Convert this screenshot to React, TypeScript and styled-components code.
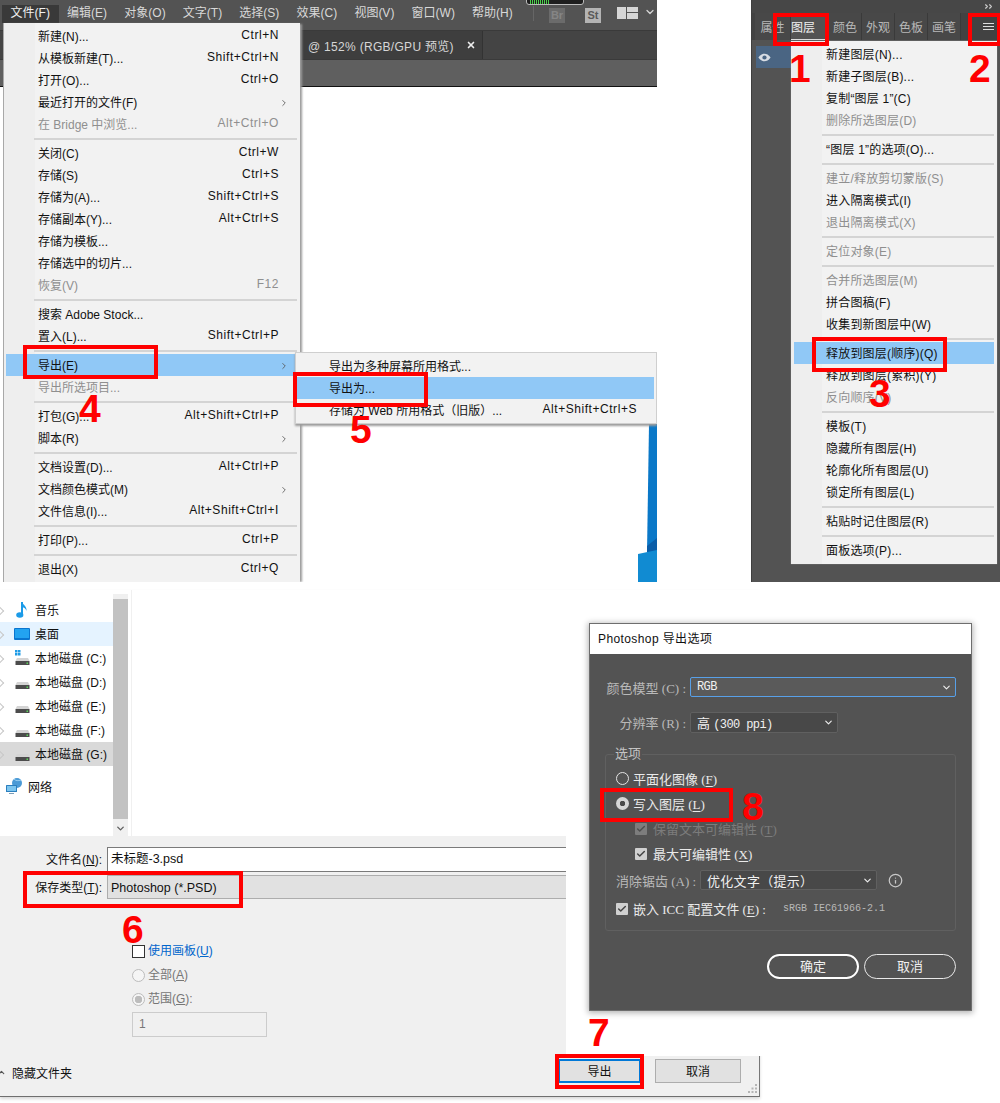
import { ChevronDown, ChevronRight, ChevronUp, Check, Info, X } from "lucide-react";
import styled, { createGlobalStyle } from "styled-components";

const sans = `"Open Sans", "Noto Sans CJK SC", sans-serif`;
const ui = `"Liberation Sans", "Noto Sans CJK SC", sans-serif`;
const serif = `"Liberation Serif", "Noto Sans CJK SC", serif`;

const Global = createGlobalStyle`
  html, body { margin: 0; background: #fff; }
  body { font-family: ${sans}; font-size: 12px; }
  * { box-sizing: border-box; }
`;

type Item = { t?: string; k?: string; off?: boolean; arrow?: boolean; on?: boolean; sep?: boolean };

const fileMenu: Item[] = [
  { t: "新建(N)...", k: "Ctrl+N" },
  { t: "从模板新建(T)...", k: "Shift+Ctrl+N" },
  { t: "打开(O)...", k: "Ctrl+O" },
  { t: "最近打开的文件(F)", arrow: true },
  { t: "在 Bridge 中浏览...", k: "Alt+Ctrl+O", off: true },
  { sep: true },
  { t: "关闭(C)", k: "Ctrl+W" },
  { t: "存储(S)", k: "Ctrl+S" },
  { t: "存储为(A)...", k: "Shift+Ctrl+S" },
  { t: "存储副本(Y)...", k: "Alt+Ctrl+S" },
  { t: "存储为模板..." },
  { t: "存储选中的切片..." },
  { t: "恢复(V)", k: "F12", off: true },
  { sep: true },
  { t: "搜索 Adobe Stock..." },
  { t: "置入(L)...", k: "Shift+Ctrl+P" },
  { sep: true },
  { t: "导出(E)", arrow: true, on: true },
  { t: "导出所选项目...", off: true },
  { sep: true },
  { t: "打包(G)...", k: "Alt+Shift+Ctrl+P" },
  { t: "脚本(R)", arrow: true },
  { sep: true },
  { t: "文档设置(D)...", k: "Alt+Ctrl+P" },
  { t: "文档颜色模式(M)", arrow: true },
  { t: "文件信息(I)...", k: "Alt+Shift+Ctrl+I" },
  { sep: true },
  { t: "打印(P)...", k: "Ctrl+P" },
  { sep: true },
  { t: "退出(X)", k: "Ctrl+Q" },
];

const exportMenu: Item[] = [
  { t: "导出为多种屏幕所用格式..." },
  { t: "导出为...", on: true },
  { t: "存储为 Web 所用格式（旧版）...", k: "Alt+Shift+Ctrl+S" },
];

const layerMenu: Item[] = [
  { t: "新建图层(N)..." },
  { t: "新建子图层(B)..." },
  { t: "复制“图层 1”(C)" },
  { t: "删除所选图层(D)", off: true },
  { sep: true },
  { t: "“图层 1”的选项(O)..." },
  { sep: true },
  { t: "建立/释放剪切蒙版(S)", off: true },
  { t: "进入隔离模式(I)" },
  { t: "退出隔离模式(X)", off: true },
  { sep: true },
  { t: "定位对象(E)", off: true },
  { sep: true },
  { t: "合并所选图层(M)", off: true },
  { t: "拼合图稿(F)" },
  { t: "收集到新图层中(W)" },
  { sep: true },
  { t: "释放到图层(顺序)(Q)", on: true },
  { t: "释放到图层(累积)(Y)" },
  { t: "反向顺序(V)", off: true },
  { sep: true },
  { t: "模板(T)" },
  { t: "隐藏所有图层(H)" },
  { t: "轮廓化所有图层(U)" },
  { t: "锁定所有图层(L)" },
  { sep: true },
  { t: "粘贴时记住图层(R)" },
  { sep: true },
  { t: "面板选项(P)..." },
];

const topMenu = ["文件(F)", "编辑(E)", "对象(O)", "文字(T)", "选择(S)", "效果(C)", "视图(V)", "窗口(W)", "帮助(H)"];
const panelTabs = ["属性", "图层", "颜色", "外观", "色板", "画笔"];
const drives = ["C", "D", "E", "F", "G"];

export default function App() {
  return (
    <Page>
      <Global />
      <AppWindow>
        <TopBar>
          {topMenu.map((m, i) => (
            <TopItem key={m} $active={i === 0}>
              {m}
            </TopItem>
          ))}
          <TopRight>
            <TopDivider />
            <BridgeBadge $kind="br">Br</BridgeBadge>
            <BridgeBadge $kind="st">St</BridgeBadge>
            <WorkspaceIcon width="21" height="12" viewBox="0 0 21 12" fill="#d6d6d6">
              <rect x="0" y="0" width="9" height="12" />
              <rect x="10" y="0" width="11" height="5" />
              <rect x="10" y="6" width="11" height="6" />
            </WorkspaceIcon>
            <WorkspaceArrow>
              <ChevronDown size={12} color="#d6d6d6" strokeWidth={2.5} />
            </WorkspaceArrow>
          </TopRight>
          <PerfPill>
            <PerfBars />
          </PerfPill>
        </TopBar>
        <TabBar>
          <DocTab>
            @ 152% (RGB/GPU 预览)
            <X size={10} color="#eee" strokeWidth={4} />
          </DocTab>
        </TabBar>
        <OptionsBar />
        <Canvas>
          <BlueShape width="24" height="158" viewBox="0 0 24 158">
            <polygon points="16,0 24,0 24,128 14,128" fill="#0a78c8" />
            <polygon points="14,122 24,114 24,130 14,128" fill="#0a5da8" />
            <polygon points="5,130 24,126 24,158 5,158" fill="#118bd2" />
          </BlueShape>
        </Canvas>
        <FileMenu>
          <MenuList items={fileMenu} />
        </FileMenu>
        <SubMenu>
          <MenuList items={exportMenu} />
        </SubMenu>
      </AppWindow>

      <LayersPanel>
        <PanelStrip>
          <ChevronRight size={7} color="#ccc" strokeWidth={4} />
          <ChevronRight size={7} color="#ccc" strokeWidth={4} />
        </PanelStrip>
        <PanelTabs>
          {panelTabs.map((t, i) => (
            <PanelTab key={t} $active={i === 1} $first={i === 0}>
              {t}
            </PanelTab>
          ))}
          <Hamburger>
            <span />
            <span />
            <span />
          </Hamburger>
        </PanelTabs>
        <LayerRow>
          <svg width="13" height="9" viewBox="0 0 16 10">
            <path d="M0.5 5C3 1.5 5.5 0.5 8 0.5S13 1.5 15.5 5C13 8.5 10.5 9.5 8 9.5S3 8.5 0.5 5Z" fill="#d8dde4" />
            <circle cx="8" cy="5" r="2.6" fill="#4a6583" />
          </svg>
        </LayerRow>
        <LayerMenu>
          <MenuList items={layerMenu} />
        </LayerMenu>
      </LayersPanel>

      <SaveDialog>
        <NavArea>
          <Tree>
            <TreeRow>
              <TreeIcon>
                <svg width="15" height="18" viewBox="0 0 15 18">
                  <path d="M7 1V13.5" stroke="#1b9be8" strokeWidth="2" />
                  <ellipse cx="4.8" cy="14" rx="3.6" ry="2.8" fill="#1b9be8" />
                  <path d="M7 1C8 4 12 5 11.5 10C11 7.5 9 6.5 7 6Z" fill="#1b9be8" />
                </svg>
              </TreeIcon>
              音乐
            </TreeRow>
            <TreeRow $tone="hover">
              <TreeIcon>
                <svg width="16" height="12" viewBox="0 0 16 12">
                  <rect x="0" y="0" width="16" height="12" rx="1" fill="#0a75cf" />
                  <rect x="1" y="1" width="14" height="9" fill="#23a3f0" />
                </svg>
              </TreeIcon>
              桌面
            </TreeRow>
            {drives.map((d) => (
              <TreeRow key={d} $tone={d === "G" ? "selected" : undefined}>
                <TreeIcon>
                  <DriveIcon system={d === "C"} />
                </TreeIcon>
                本地磁盘 ({d}:)
              </TreeRow>
            ))}
            <NetworkRow>
              <svg width="17" height="16" viewBox="0 0 17 16">
                <circle cx="11" cy="5" r="5" fill="#4a9ad6" />
                <path d="M8 1C10 3 12 3 15 2" stroke="#9ad0f2" fill="none" />
                <rect x="0" y="7" width="11" height="7" rx="0.5" fill="#2c7fbe" />
                <rect x="1" y="8" width="9" height="5" fill="#7cc5ef" />
                <rect x="3" y="15" width="5" height="1" fill="#7a9db8" />
              </svg>
              网络
            </NetworkRow>
          </Tree>
          <Scroller>
            <ScrollThumb />
            <ChevronDown size={11} color="#606060" strokeWidth={3} />
          </Scroller>
          <PaneDivider />
        </NavArea>
        <FormArea>
          <FieldRow>
            <FieldLabel>
              文件名(<u>N</u>):
            </FieldLabel>
            <NameInput>未标题-3.psd</NameInput>
          </FieldRow>
          <FieldRow>
            <FieldLabel>
              保存类型(<u>T</u>):
            </FieldLabel>
            <TypeSelect>Photoshop (*.PSD)</TypeSelect>
          </FieldRow>
          <SaveOptions>
            <SaveOption>
              <PlainCheck />
              <BlueText>
                使用画板(<u>U</u>)
              </BlueText>
            </SaveOption>
            <SaveOption $off>
              <PlainRadio />
              <span>
                全部(<u>A</u>)
              </span>
            </SaveOption>
            <SaveOption $off>
              <PlainRadio $on />
              <span>
                范围(<u>G</u>):
              </span>
            </SaveOption>
            <RangeInput>1</RangeInput>
          </SaveOptions>
          <Footer>
            <HideFolders>
              <ChevronUp size={9} color="#555" strokeWidth={3} />
              隐藏文件夹
            </HideFolders>
            <FooterButtons>
              <WinButton $primary>导出</WinButton>
              <WinButton>取消</WinButton>
            </FooterButtons>
            <Grip width="10" height="10" viewBox="0 0 10 10" fill="#b5b5b5">
              <rect x="7" y="0" width="2" height="2" />
              <rect x="3.5" y="3.5" width="2" height="2" />
              <rect x="7" y="3.5" width="2" height="2" />
              <rect x="0" y="7" width="2" height="2" />
              <rect x="3.5" y="7" width="2" height="2" />
              <rect x="7" y="7" width="2" height="2" />
            </Grip>
          </Footer>
        </FormArea>
      </SaveDialog>

      <OptionsBacking>
        <ExportDialog>
          <DialogTitle>Photoshop 导出选项</DialogTitle>
          <DialogBody>
            <LabelRow>
              <DialogLabel>颜色模型 (C) :</DialogLabel>
              <DarkSelect $w={266} $h={20} $focus>
                <Mono>RGB</Mono>
                <ChevronDown size={11} strokeWidth={2.5} />
              </DarkSelect>
            </LabelRow>
            <LabelRow $mt={15}>
              <DialogLabel>分辨率 (R) :</DialogLabel>
              <DarkSelect $w={148} $h={21}>
                <span>
                  高 <Mono>(300 ppi)</Mono>
                </span>
                <ChevronDown size={11} strokeWidth={2.5} />
              </DarkSelect>
            </LabelRow>
            <Group>
              <GroupLegend>选项</GroupLegend>
              <GroupRow>
                <DarkRadio />
                <span>
                  平面化图像 (<u>F</u>)
                </span>
              </GroupRow>
              <GroupRow>
                <DarkRadio $on />
                <span>
                  写入图层 (<u>L</u>)
                </span>
              </GroupRow>
              <GroupRow $indent $off>
                <DarkCheck $off>
                  <Check size={10} strokeWidth={3.5} />
                </DarkCheck>
                <span>
                  保留文本可编辑性 (<u>T</u>)
                </span>
              </GroupRow>
              <GroupRow $indent>
                <DarkCheck>
                  <Check size={10} strokeWidth={3.5} />
                </DarkCheck>
                <span>
                  最大可编辑性 (<u>X</u>)
                </span>
              </GroupRow>
              <AliasRow>
                <AliasLabel>消除锯齿 (A) :</AliasLabel>
                <DarkSelect $w={177} $h={20}>
                  <AliasValue>优化文字（提示）</AliasValue>
                  <ChevronDown size={11} strokeWidth={2.5} />
                </DarkSelect>
                <InfoIcon>
                  <Info size={15} strokeWidth={2} />
                </InfoIcon>
              </AliasRow>
              <EmbedRow>
                <DarkCheck>
                  <Check size={10} strokeWidth={3.5} />
                </DarkCheck>
                <span>
                  嵌入 ICC 配置文件 (<u>E</u>) :
                </span>
                <ProfileName>sRGB IEC61966-2.1</ProfileName>
              </EmbedRow>
            </Group>
            <DialogButtons>
              <PillButton $main>确定</PillButton>
              <PillButton>取消</PillButton>
            </DialogButtons>
          </DialogBody>
        </ExportDialog>
      </OptionsBacking>

      <RedBox $x={23} $y={345} $w={135} $h={34} />
      <RedBox $x={293} $y={372} $w={135} $h={35} />
      <RedBox $x={773} $y={13} $w={56} $h={33} />
      <RedBox $x={968} $y={13} $w={33} $h={33} />
      <RedBox $x={812} $y={337} $w={135} $h={35} />
      <RedBox $x={23} $y={871} $w={220} $h={37} />
      <RedBox $x={555} $y={1054} $w={89} $h={35} />
      <RedBox $x={600} $y={788} $w={133} $h={34} />
      <StepNumber $x={79} $y={385}>4</StepNumber>
      <StepNumber $x={350} $y={406}>5</StepNumber>
      <StepNumber $x={789} $y={45}>1</StepNumber>
      <StepNumber $x={969} $y={45}>2</StepNumber>
      <StepNumber $x={869} $y={370}>3</StepNumber>
      <StepNumber $x={122} $y={906}>6</StepNumber>
      <StepNumber $x={588} $y={1009}>7</StepNumber>
      <StepNumber $x={742} $y={783}>8</StepNumber>
    </Page>
  );
}

function MenuList({ items }: { items: Item[] }) {
  return (
    <>
      {items.map((item, i) =>
        item.sep ? (
          <MenuSep key={i} />
        ) : (
          <MenuRow key={i} $off={item.off} $on={item.on}>
            <MenuText>{item.t}</MenuText>
            {item.k && <MenuKey>{item.k}</MenuKey>}
            {item.arrow && (
              <MenuArrow>
                <ChevronRight size={10} strokeWidth={2} />
              </MenuArrow>
            )}
          </MenuRow>
        )
      )}
    </>
  );
}

function DriveIcon({ system }: { system: boolean }) {
  return (
    <svg width="15" height="16" viewBox="0 0 15 16">
      {system && (
        <g fill="#1e9be6">
          <rect x="0" y="0" width="2.5" height="2.5" />
          <rect x="3" y="0" width="2.5" height="2.5" />
          <rect x="0" y="3" width="2.5" height="2.5" />
          <rect x="3" y="3" width="2.5" height="2.5" />
        </g>
      )}
      <path d="M2 8H13L14.5 11H0.5Z" fill="#d4d4d4" />
      <rect x="0.5" y="11" width="14" height="4" fill="#4c4c4c" />
      <rect x="11.5" y="12.5" width="1.5" height="1.5" fill="#5ad65a" />
    </svg>
  );
}

const Page = styled.div`
  position: relative;
  width: 1000px;
  height: 1103px;
  overflow: hidden;
  background: #fff;
`;

/* ---------- top left: the application window ---------- */

const AppWindow = styled.section`
  position: absolute;
  left: 0;
  top: 0;
  width: 657px;
  height: 582px;
  display: flex;
  flex-direction: column;
  overflow: hidden;
`;

const TopBar = styled.div`
  position: relative;
  height: 30px;
  flex: none;
  display: flex;
  align-items: flex-start;
  padding: 5px 0 0 2px;
  background: #535353;
`;

const TopItem = styled.div<{ $active?: boolean }>`
  height: 18px;
  padding: 0 8.6px;
  line-height: 16px;
  font-family: ${ui};
  font-size: 12px;
  color: ${(p) => (p.$active ? "#f0f0f0" : "#d8d8d8")};
  background: ${(p) => (p.$active ? "#393939" : "transparent")};
`;

const TopRight = styled.div`
  margin-left: auto;
  display: flex;
  align-items: center;
  padding-right: 1px;
  height: 17px;
`;

const TopDivider = styled.i`
  width: 1px;
  height: 15px;
  background: #666;
`;

const BridgeBadge = styled.span<{ $kind: "br" | "st" }>`
  width: 16px;
  height: 15px;
  margin-left: ${(p) => (p.$kind === "br" ? "15px" : "20px")};
  margin-top: 3px;
  line-height: 15px;
  text-align: center;
  font-family: ${ui};
  font-size: 11px;
  font-weight: 700;
  background: ${(p) => (p.$kind === "br" ? "#6b6b6b" : "#b4b4b4")};
  color: ${(p) => (p.$kind === "br" ? "#858585" : "#5a5a5a")};
`;

const WorkspaceIcon = styled.svg`
  margin-left: 16px;
  margin-top: -2px;
`;

const WorkspaceArrow = styled.span`
  margin-left: 6px;
  margin-top: -4px;
  display: flex;
`;

const PerfPill = styled.div`
  position: absolute;
  left: 526px;
  top: -4px;
  width: 58px;
  height: 9px;
  border-radius: 3px;
  background: #1e1e1e;
  border: 1px solid #bbb;
  padding: 3px 0 0 3px;
`;

const PerfBars = styled.div`
  width: 20px;
  height: 4px;
  background: repeating-linear-gradient(90deg, #4ad04a 0 1px, #1e1e1e 1px 2px);
`;

const TabBar = styled.div`
  height: 30px;
  flex: none;
  display: flex;
  padding-left: 300px;
  background: #444;
  border-top: 1px solid #3a3a3a;
  border-bottom: 1px solid #3a3a3a;
`;

const DocTab = styled.div`
  width: 183px;
  display: flex;
  align-items: center;
  justify-content: space-between;
  padding: 0 6px 0 8px;
  background: #3e3e3e;
  border-right: 1px solid #333;
  font-family: ${ui};
  font-size: 12px;
  letter-spacing: 0.3px;
  color: #d6d6d6;
`;

const OptionsBar = styled.div`
  height: 27px;
  flex: none;
  background: #5f5f5f;
  border-bottom: 1px solid #111;
`;

const Canvas = styled.div`
  flex: 1;
  position: relative;
  background: #fff;
`;

const BlueShape = styled.svg`
  position: absolute;
  right: 0;
  bottom: 0;
`;

const FileMenu = styled.div`
  position: absolute;
  left: 3px;
  top: 23px;
  width: 297px;
  height: 560px;
  padding: 2px 5px 0 2px;
  background: linear-gradient(90deg, #eeeeee 0 31px, #f2f2f2 31px);
  border-left: 1px solid #a8a8a8;
  box-shadow: 3px 0 2px -1px #9c9c9c;
  --menu-pad: 32px;
  --key-right: 16px;
  --arrow-right: 6px;
  --sep-left: 28px;
  --sep-right: -2px;
`;

const SubMenu = styled.div`
  position: absolute;
  left: 295px;
  top: 352px;
  width: 362px;
  height: 72px;
  padding: 2px 2px 0 1px;
  background: #f2f2f2;
  border: 1px solid #cfcfcf;
  box-shadow: 0 2px 2px #9c9c9c;
  --menu-pad: 32px;
  --key-right: 17px;
  --arrow-right: 7px;
  --sep-left: 28px;
  --sep-right: 0;
`;

const MenuRow = styled.div<{ $off?: boolean; $on?: boolean }>`
  position: relative;
  height: 22px;
  display: flex;
  align-items: center;
  justify-content: space-between;
  padding: 0 var(--key-right) 2px var(--menu-pad);
  font-family: ${ui};
  font-size: 12px;
  white-space: nowrap;
  color: ${(p) => (p.$off ? "#8f8f8f" : "#111")};
  background: ${(p) => (p.$on ? "#90c8f6" : "transparent")};
`;

const MenuText = styled.span``;

const MenuKey = styled.span`
  letter-spacing: 0.55px;
`;

const MenuArrow = styled.span`
  position: absolute;
  right: var(--arrow-right);
  top: 6px;
  color: #555;
`;

const MenuSep = styled.div`
  height: 7px;
  margin: 0 var(--sep-right) 0 var(--sep-left);
  background: linear-gradient(#0000 0 3px, #d4d4d4 3px 5px, #0000 5px);
`;

/* ---------- top right: the layers panel ---------- */

const LayersPanel = styled.section`
  position: absolute;
  left: 751px;
  top: 0;
  width: 249px;
  height: 582px;
  background: #535353;
  border-left: 1px solid #3f3f3f;
  padding-left: 3px;
`;

const PanelStrip = styled.div`
  height: 13px;
  margin-left: -3px;
  display: flex;
  align-items: center;
  justify-content: flex-end;
  padding-right: 6px;
  background: #474747;
  svg + svg {
    margin-left: -3px;
  }
`;

const PanelTabs = styled.div`
  height: 27px;
  margin-left: -3px;
  padding-left: 3px;
  display: flex;
  align-items: stretch;
  background: #424242;
`;

const PanelTab = styled.div<{ $active?: boolean; $first?: boolean }>`
  width: ${(p) => (p.$first ? "36px" : p.$active ? "38px" : "33px")};
  display: flex;
  align-items: center;
  justify-content: ${(p) => (p.$active ? "flex-start" : "center")};
  font-family: ${ui};
  font-size: 12px;
  color: ${(p) => (p.$active ? "#f0f0f0" : "#b8b8b8")};
  background: ${(p) => (p.$active ? "#535353" : "#484848")};
  border-right: 1px solid #3a3a3a;
  ${(p) => (p.$active ? "border-bottom: 1px solid #ddd;" : "")}
`;

const Hamburger = styled.div`
  margin-left: auto;
  margin-right: 6px;
  width: 11px;
  display: flex;
  flex-direction: column;
  justify-content: center;
  gap: 2px;
  span {
    height: 1px;
    background: #ddd;
  }
`;

const LayerRow = styled.div`
  width: 37px;
  height: 22px;
  margin-top: 6px;
  margin-left: 1px;
  display: flex;
  align-items: center;
  padding-left: 2px;
  background: #4a6583;
`;

const LayerMenu = styled.div`
  position: absolute;
  left: 39px;
  top: 41px;
  width: 206px;
  height: 523px;
  padding: 2px 3px 0 3px;
  background: linear-gradient(90deg, #eeeeee 0 31px, #f2f2f2 31px);
  box-shadow: 0 0 1px #999;
  --menu-pad: 32px;
  --key-right: 4px;
  --arrow-right: 4px;
  --sep-left: 28px;
  --sep-right: 0;
  ${MenuText} {
    letter-spacing: 0.2px;
  }
`;

/* ---------- bottom left: the save dialog ---------- */

const SaveDialog = styled.section`
  position: absolute;
  left: 0;
  top: 590px;
  width: 760px;
  height: 507px;
  display: flex;
  flex-direction: column;
  background: #f0f0f0;
  border-right: 1px solid #777;
  border-bottom: 1px solid #6f6f6f;
  box-shadow: 0 2px 3px #d8d8d8;
  font-family: ${ui};
  font-size: 12px;
  color: #111;
`;

const NavArea = styled.div`
  height: 246px;
  flex: none;
  display: flex;
  background: #fff;
`;

const Tree = styled.div`
  width: 113px;
  padding-top: 8px;
`;

const TreeRow = styled.div<{ $tone?: "hover" | "selected" }>`
  position: relative;
  height: 24px;
  display: flex;
  align-items: center;
  padding-bottom: 1px;
  white-space: nowrap;
  background: ${(p) => (p.$tone === "hover" ? "#e5f3ff" : p.$tone === "selected" ? "#d9d9d9" : "transparent")};
  &::before {
    content: "";
    position: absolute;
    left: -3px;
    top: 10px;
    width: 5px;
    height: 5px;
    border-top: 1px solid #c8c8c8;
    border-right: 1px solid #c8c8c8;
    transform: rotate(45deg);
  }
`;

const TreeIcon = styled.span`
  width: 35px;
  flex: none;
  display: flex;
  justify-content: flex-end;
  padding-right: 5px;
`;

const NetworkRow = styled.div`
  height: 24px;
  margin-top: 9px;
  padding: 0 0 2px 6px;
  display: flex;
  align-items: center;
  gap: 5px;
`;

const Scroller = styled.div`
  width: 15px;
  margin-top: 4px;
  display: flex;
  flex-direction: column;
  align-items: center;
  background: #f0f0f0;
`;

const ScrollThumb = styled.div`
  width: 100%;
  height: 220px;
  margin-top: 5px;
  margin-bottom: 4px;
  background: #c2c2c2;
`;

const PaneDivider = styled.div`
  width: 1px;
  margin-left: 3px;
  background: #f0f0f0;
`;

const FormArea = styled.div`
  flex: 1;
  display: flex;
  flex-direction: column;
  padding-top: 11px;
  min-height: 0;
`;

const FieldRow = styled.div`
  display: flex;
  align-items: center;
  gap: 5px;
  margin-bottom: 3px;
`;

const FieldLabel = styled.label`
  width: 102px;
  padding-bottom: 2px;
  text-align: right;
`;

const NameInput = styled.div`
  flex: 1;
  height: 25px;
  padding-left: 3px;
  line-height: 22px;
  background: #fff;
  border: 1px solid #7a7a7a;
  border-right: 0;
  font-size: 12.5px;
`;

const TypeSelect = styled.div`
  flex: 1;
  height: 24px;
  padding-left: 3px;
  line-height: 24px;
  background: #e1e1e1;
  border: 1px solid #adadad;
  border-right: 0;
  font-size: 12.5px;
`;

const SaveOptions = styled.div`
  margin: 37px 0 0 132px;
  display: flex;
  flex-direction: column;
`;

const SaveOption = styled.div<{ $off?: boolean }>`
  height: 24px;
  display: flex;
  align-items: center;
  gap: 3px;
  color: ${(p) => (p.$off ? "#767676" : "#111")};
  span {
    margin-bottom: 3px;
  }
`;

const PlainCheck = styled.i`
  width: 13px;
  height: 13px;
  background: #fff;
  border: 1px solid #333;
`;

const PlainRadio = styled.i<{ $on?: boolean }>`
  width: 13px;
  height: 13px;
  border-radius: 50%;
  border: 1px solid #bcbcbc;
  background: ${(p) => (p.$on ? "radial-gradient(circle, #bcbcbc 0 3.5px, #f5f5f5 4px)" : "#f5f5f5")};
`;

const BlueText = styled.span`
  color: #0066cc;
`;

const RangeInput = styled.div`
  width: 135px;
  height: 25px;
  margin-top: 1px;
  padding-left: 6px;
  line-height: 23px;
  border: 1px solid #ccc;
  color: #777;
`;

const Footer = styled.div`
  position: relative;
  margin-top: auto;
  display: flex;
  align-items: center;
  justify-content: space-between;
  height: 24px;
  margin-bottom: 13px;
  padding: 0 18px 0 0;
`;

const HideFolders = styled.div`
  display: flex;
  align-items: center;
  gap: 6px;
  margin-left: -3px;
  margin-top: 2px;
`;

const FooterButtons = styled.div`
  display: flex;
  gap: 14px;
`;

const WinButton = styled.div<{ $primary?: boolean }>`
  width: ${(p) => (p.$primary ? "83px" : "86px")};
  height: 24px;
  line-height: ${(p) => (p.$primary ? "22px" : "24px")};
  text-align: center;
  background: #e1e1e1;
  border: ${(p) => (p.$primary ? "2px solid #0078d7" : "1px solid #adadad")};
`;

const Grip = styled.svg`
  position: absolute;
  right: 1px;
  bottom: -11px;
`;

/* ---------- bottom right: the export options ---------- */

const OptionsBacking = styled.section`
  position: absolute;
  left: 566px;
  top: 590px;
  width: 434px;
  height: 466px;
  padding: 33px 0 0 23px;
  background: #fff;
`;

const ExportDialog = styled.div`
  width: 383px;
  height: 388px;
  display: flex;
  flex-direction: column;
  border: 1px solid #6e6e6e;
  box-shadow: 0 1px 6px 1px rgba(0, 0, 0, 0.3);
`;

const DialogTitle = styled.div`
  height: 30px;
  flex: none;
  padding-left: 8px;
  line-height: 30px;
  background: #fff;
  font-family: ${ui};
  font-size: 12px;
  letter-spacing: 0.4px;
  color: #111;
`;

const DialogBody = styled.div`
  flex: 1;
  padding: 23px 15px 0 15px;
  background: #535353;
  font-family: ${serif};
  font-size: 13px;
  color: #e3e3e3;
  u {
    text-underline-offset: 2px;
  }
`;

const Mono = styled.span`
  font-family: "Liberation Mono", monospace;
  font-size: 12px;
  letter-spacing: -0.6px;
`;

const LabelRow = styled.div<{ $mt?: number }>`
  display: flex;
  align-items: center;
  gap: 4px;
  margin-top: ${(p) => p.$mt ?? 0}px;
`;

const DialogLabel = styled.label`
  width: 81px;
  flex: none;
  text-align: right;
  white-space: nowrap;
  color: #b9b9b9;
`;

const DarkSelect = styled.div<{ $w: number; $h: number; $focus?: boolean }>`
  width: ${(p) => p.$w}px;
  height: ${(p) => p.$h}px;
  flex: none;
  display: flex;
  align-items: center;
  justify-content: space-between;
  padding: 0 3px 0 6px;
  border-radius: 2px;
  white-space: pre;
  color: #f0f0f0;
  background: ${(p) => (p.$focus ? "#5a5a5a" : "#484848")};
  border: 1px solid ${(p) => (p.$focus ? "#58a0e8" : "#606060")};
  svg {
    color: #eee;
  }
`;

const Group = styled.fieldset`
  margin: 13px 0 0;
  padding: 4px 0 9px 10px;
  width: 351px;
  min-width: 0;
  border: 1px solid #606060;
  border-radius: 3px;
`;

const GroupLegend = styled.legend`
  margin-left: -2px;
  padding: 0 1px;
  line-height: 16px;
  color: #c4c4c4;
`;

const GroupRow = styled.div<{ $indent?: boolean; $off?: boolean }>`
  height: 25px;
  display: flex;
  align-items: center;
  gap: ${(p) => (p.$indent ? "6px" : "4px")};
  padding-left: ${(p) => (p.$indent ? "19px" : "0")};
  color: ${(p) => (p.$off ? "#7c7c7c" : "#eaeaea")};
  white-space: pre;
`;

const DarkRadio = styled.i<{ $on?: boolean }>`
  width: 13px;
  height: 13px;
  flex: none;
  border-radius: 50%;
  border: ${(p) => (p.$on ? "none" : "1px solid #e4e4e4")};
  background: ${(p) => (p.$on ? "radial-gradient(circle, #4a4a4a 0 2.5px, #d6d6d6 3px)" : "transparent")};
`;

const DarkCheck = styled.i<{ $off?: boolean }>`
  width: 12px;
  height: 12px;
  flex: none;
  display: flex;
  align-items: center;
  justify-content: center;
  border-radius: 1px;
  background: ${(p) => (p.$off ? "#7d7d7d" : "#d0d0d0")};
  color: ${(p) => (p.$off ? "#4f4f4f" : "#444")};
`;

const AliasRow = styled.div`
  display: flex;
  align-items: center;
  gap: 4px;
  margin-top: 4px;
  height: 20px;
`;

const AliasLabel = styled.label`
  width: 80px;
  flex: none;
  white-space: nowrap;
  color: #b9b9b9;
`;

const AliasValue = styled.span`
  letter-spacing: 0.3px;
`;

const InfoIcon = styled.span`
  margin-left: 7px;
  display: flex;
  color: #c8c8c8;
`;

const EmbedRow = styled.div`
  height: 25px;
  margin-top: 6px;
  display: flex;
  align-items: center;
  gap: 5px;
  white-space: pre;
  color: #eaeaea;
`;

const ProfileName = styled.span`
  margin-left: 12px;
  font-family: "Liberation Mono", monospace;
  font-size: 10px;
  color: #b8b8b8;
`;

const DialogButtons = styled.div`
  margin-top: 23px;
  display: flex;
  justify-content: flex-end;
  gap: 5px;
`;

const PillButton = styled.div<{ $main?: boolean }>`
  width: 92px;
  height: 25px;
  line-height: ${(p) => (p.$main ? "21px" : "23px")};
  text-align: center;
  border-radius: 13px;
  color: #f0f0f0;
  border: ${(p) => (p.$main ? "2px solid #fff" : "1px solid #e8e8e8")};
`;

/* ---------- the red annotations ---------- */

const RedBox = styled.div<{ $x: number; $y: number; $w: number; $h: number }>`
  position: absolute;
  left: ${(p) => p.$x}px;
  top: ${(p) => p.$y}px;
  width: ${(p) => p.$w}px;
  height: ${(p) => p.$h}px;
  border: 4px solid #f00;
`;

const StepNumber = styled.div<{ $x: number; $y: number }>`
  position: absolute;
  left: ${(p) => p.$x}px;
  top: ${(p) => p.$y}px;
  font-family: "Liberation Sans", sans-serif;
  font-size: 39px;
  font-weight: 700;
  line-height: 47px;
  color: #f00;
`;
